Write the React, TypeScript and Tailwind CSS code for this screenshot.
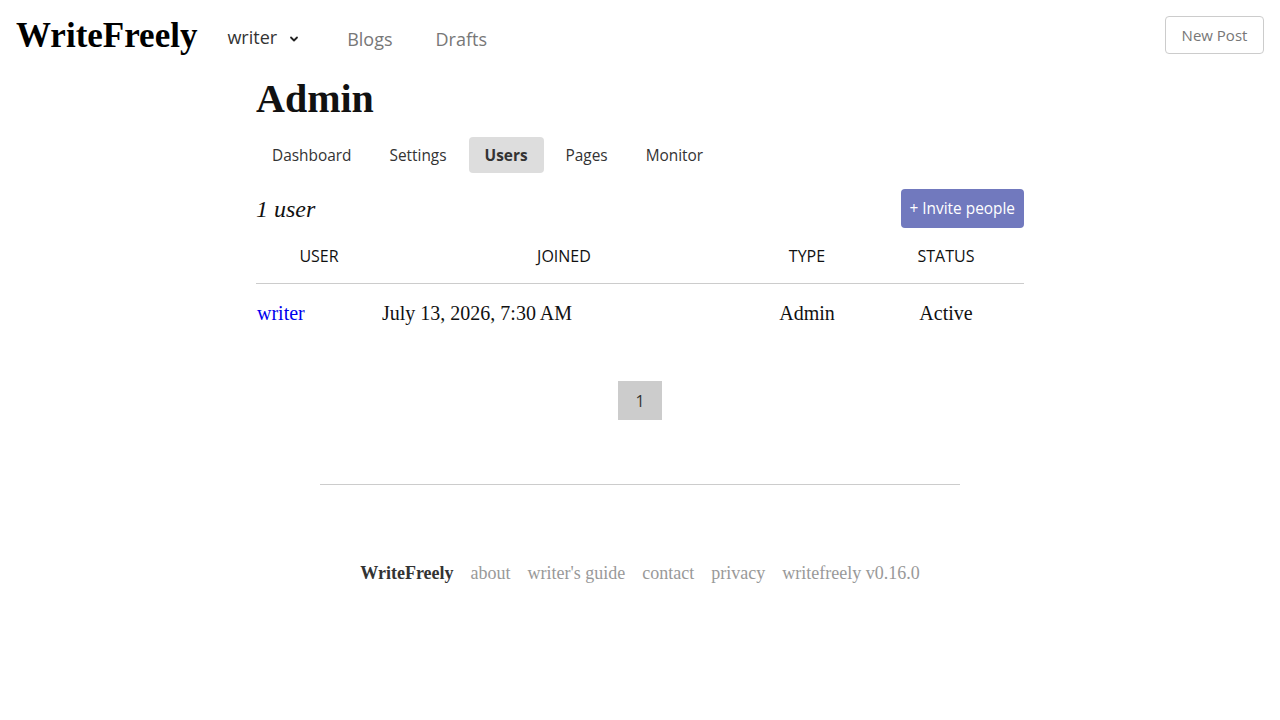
import React from "react";

const serif = { fontFamily: '"Liberation Serif", "Times New Roman", serif' };
const sans = { fontFamily: '"Open Sans", "Noto Sans", sans-serif' };

export default function App() {
  const tabs = ["Dashboard", "Settings", "Users", "Pages", "Monitor"];
  return (
    <div className="min-h-screen bg-white text-[#111]" style={sans}>
      <header className="flex h-[72px] items-center px-4">
        <div className="flex items-center">
          <a className="text-[35px] font-bold leading-none text-black mt-[-1px]" style={serif}>
            WriteFreely
          </a>
          <div className="ml-[30px] mt-[3px] flex items-center text-[18px] text-[#333]">
            <span>writer</span>
            <svg className="ml-[11px] mt-[2px]" width="12" height="12" viewBox="0 0 12 12">
              <path d="M3 4.5 L6 7.5 L9 4.5" fill="none" stroke="#222" strokeWidth="1.8" strokeLinecap="round" strokeLinejoin="round" />
            </svg>
          </div>
          <nav className="ml-[47px] mt-[7px] flex items-center gap-[43px] text-[18px] text-[#777]">
            <span>Blogs</span>
            <span>Drafts</span>
          </nav>
        </div>
        <div className="ml-auto mt-[-2px]">
          <button className="h-[38px] w-[99px] rounded-[4px] border border-[#ccc] text-[15px] text-[#777]">
            New Post
          </button>
        </div>
      </header>

      <main className="mx-auto w-[768px]">
        <h1 className="mt-[3px] text-[40px] font-bold leading-[48px] text-[#111]" style={serif}>
          Admin
        </h1>
        <div className="mt-[14px] flex gap-[6px] text-[15.4px] text-[#333]">
          {tabs.map((t) => (
            <div
              key={t}
              className={
                "flex h-9 items-center rounded-[4px] px-4 pt-[2px] " +
                (t === "Users" ? "bg-[#ddd] font-bold" : "")
              }
            >
              {t}
            </div>
          ))}
        </div>

        <div className="mt-[16px] flex items-center justify-between">
          <h2 className="text-[24px] italic leading-none" style={serif}>
            1 user
          </h2>
          <button className="h-[39px] rounded-[4px] bg-[#7179be] px-[9px] text-[15.4px] text-white">
            + Invite people
          </button>
        </div>

        <table className="w-full border-collapse">
          <colgroup>
            <col className="w-[126px]" />
            <col className="w-[364px]" />
            <col className="w-[122px]" />
            <col className="w-[156px]" />
          </colgroup>
          <thead>
            <tr className="h-[55px] border-b border-[#ccc] text-[16px] font-normal uppercase">
              <th className="pt-[2px] text-center font-normal">User</th>
              <th className="pt-[2px] text-center font-normal">Joined</th>
              <th className="pt-[2px] text-center font-normal">Type</th>
              <th className="pt-[2px] text-center font-normal">Status</th>
            </tr>
          </thead>
          <tbody className="text-[20px]" style={serif}>
            <tr className="h-[60px]">
              <td className="pl-[1px] text-left">
                <a className="text-[#0000ee]">writer</a>
              </td>
              <td className="text-left">July 13, 2026, 7:30 AM</td>
              <td className="text-center">Admin</td>
              <td className="text-center">Active</td>
            </tr>
          </tbody>
        </table>

        <div className="mt-[38px] flex justify-center">
          <span className="flex h-[39px] w-[44px] items-center justify-center bg-[#ccc] text-[16px] text-[#333]">
            1
          </span>
        </div>
      </main>

      <hr className="mx-auto mt-[64px] w-[640px] border-0 border-t border-[#ccc]" />

      <footer className="mt-[75px] flex justify-center gap-[17px] text-[18px]" style={serif}>
        <span className="font-bold text-[#333]">WriteFreely</span>
        <span className="text-[#999]">about</span>
        <span className="text-[#999]">writer's guide</span>
        <span className="text-[#999]">contact</span>
        <span className="text-[#999]">privacy</span>
        <span className="text-[#999]">writefreely v0.16.0</span>
      </footer>
    </div>
  );
}
